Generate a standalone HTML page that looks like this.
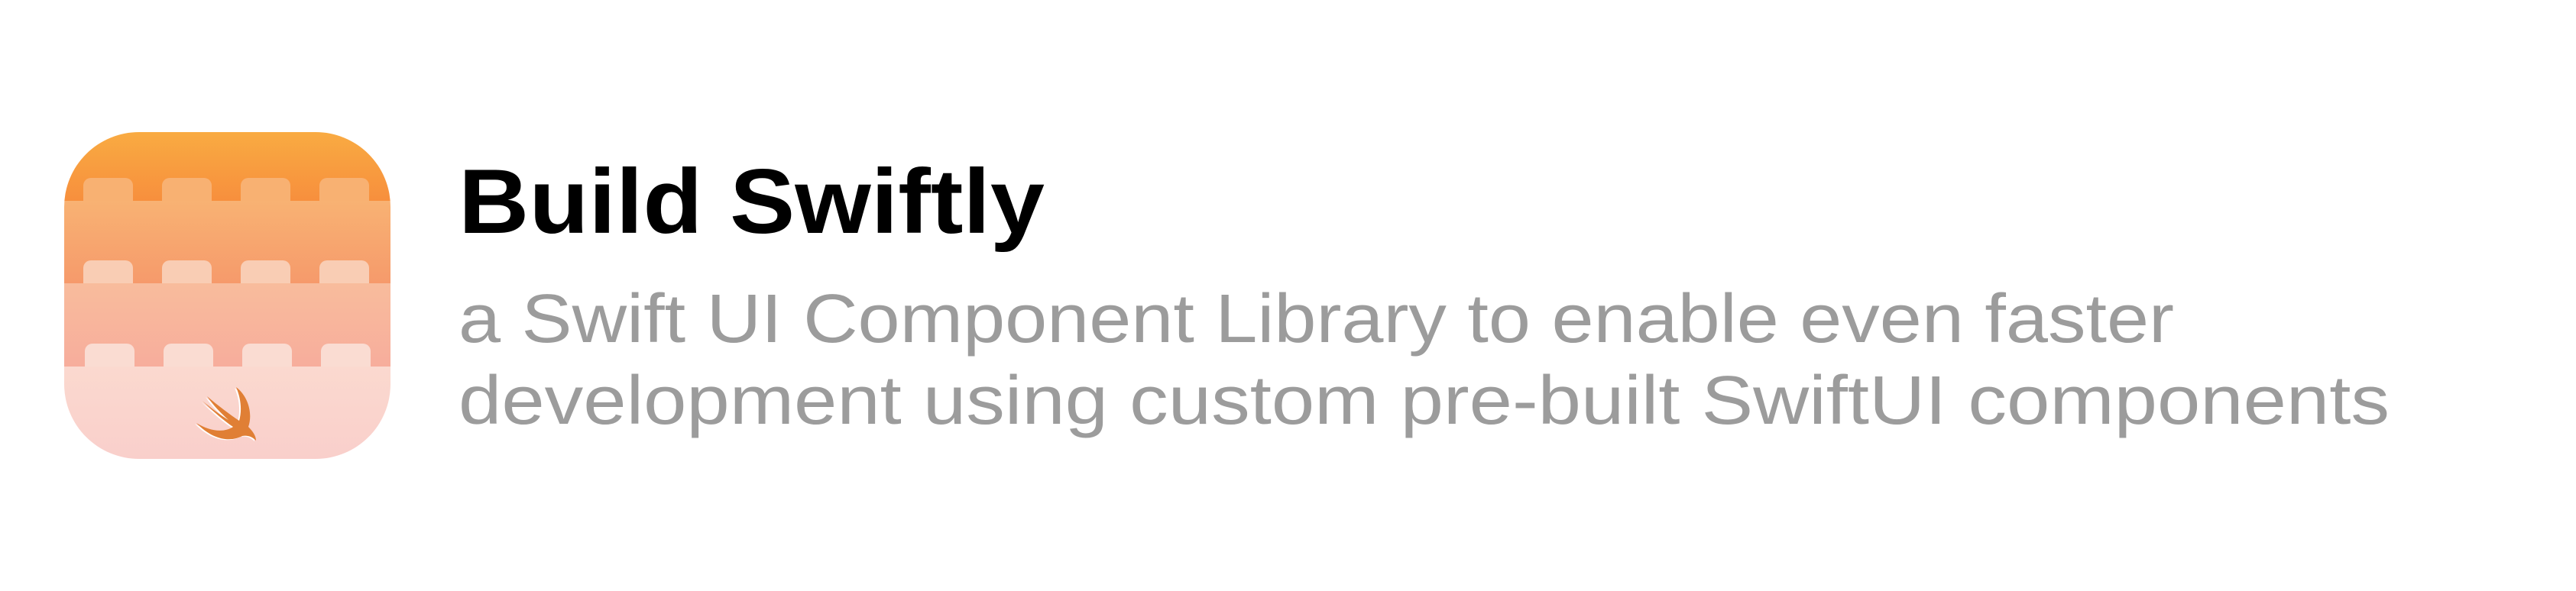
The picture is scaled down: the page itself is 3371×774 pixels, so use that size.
<!DOCTYPE html>
<html><head><meta charset="utf-8"><style>
html,body{margin:0;padding:0;background:#fff;width:3371px;height:774px;overflow:hidden}
</style></head><body>
<svg width="3371" height="774" viewBox="0 0 3371 774" xmlns="http://www.w3.org/2000/svg">
<defs>
<clipPath id="c"><rect x="84" y="173" width="427" height="428" rx="98" ry="98"/></clipPath>
<linearGradient id="g1" x1="0" y1="0" x2="0" y2="1"><stop offset="0" stop-color="#f9ab42"/><stop offset="1" stop-color="#f78f3d"/></linearGradient>
<linearGradient id="g2" x1="0" y1="0" x2="0" y2="1"><stop offset="0" stop-color="#f8b273"/><stop offset="1" stop-color="#f69a6b"/></linearGradient>
<linearGradient id="g3" x1="0" y1="0" x2="0" y2="1"><stop offset="0" stop-color="#f8bc9c"/><stop offset="1" stop-color="#f7ad9c"/></linearGradient>
<linearGradient id="g4" x1="0" y1="0" x2="0" y2="1"><stop offset="0" stop-color="#fbd9cf"/><stop offset="1" stop-color="#f9cfcb"/></linearGradient>
</defs>
<g clip-path="url(#c)">
<rect x="84" y="173" width="427" height="90" fill="url(#g1)"/>
<rect x="84" y="263" width="427" height="108" fill="url(#g2)"/>
<rect x="84" y="371" width="427" height="109" fill="url(#g3)"/>
<rect x="84" y="480" width="427" height="121" fill="url(#g4)"/>
</g>
<g fill="#f8b172">
<path d="M109 263V243a10 10 0 0 1 10-10h45a10 10 0 0 1 10 10v20z"/>
<path d="M212 263V243a10 10 0 0 1 10-10h45a10 10 0 0 1 10 10v20z"/>
<path d="M315 263V243a10 10 0 0 1 10-10h45a10 10 0 0 1 10 10v20z"/>
<path d="M418 263V243a10 10 0 0 1 10-10h45a10 10 0 0 1 10 10v20z"/>
</g>
<g fill="#f9cdb4">
<path d="M109 371V351a10 10 0 0 1 10-10h45a10 10 0 0 1 10 10v20z"/>
<path d="M212 371V351a10 10 0 0 1 10-10h45a10 10 0 0 1 10 10v20z"/>
<path d="M315 371V351a10 10 0 0 1 10-10h45a10 10 0 0 1 10 10v20z"/>
<path d="M418 371V351a10 10 0 0 1 10-10h45a10 10 0 0 1 10 10v20z"/>
</g>
<g fill="#fadcd2">
<path d="M111 480V460a10 10 0 0 1 10-10h45a10 10 0 0 1 10 10v20z"/>
<path d="M214 480V460a10 10 0 0 1 10-10h45a10 10 0 0 1 10 10v20z"/>
<path d="M317 480V460a10 10 0 0 1 10-10h45a10 10 0 0 1 10 10v20z"/>
<path d="M420 480V460a10 10 0 0 1 10-10h45a10 10 0 0 1 10 10v20z"/>
</g>
<g transform="translate(257,507)">
<path d="M52,0 C68,12 74,35 68,52 C74,58 78,64 78,70 C72,64 66,63 60,64 C45,72 22,70 0,47 C18,58 36,60 48,52 C36,44 22,32 8,18 C20,28 32,37 42,43 C32,34 22,24 14,12 C28,24 44,36 56,44 C60,30 58,14 52,0 Z" fill="#fff" transform="translate(-2,1)"/>
<path d="M52,0 C68,12 74,35 68,52 C74,58 78,64 78,70 C72,64 66,63 60,64 C45,72 22,70 0,47 C18,58 36,60 48,52 C36,44 22,32 8,18 C20,28 32,37 42,43 C32,34 22,24 14,12 C28,24 44,36 56,44 C60,30 58,14 52,0 Z" fill="#e07f35"/>
</g>
<text x="600" y="305" font-family="Liberation Sans, sans-serif" font-weight="bold" font-size="120" fill="#000" textLength="767" lengthAdjust="spacingAndGlyphs">Build Swiftly</text>
<text x="600" y="448" font-family="Liberation Sans, sans-serif" font-size="90" fill="#9c9c9c" textLength="2245" lengthAdjust="spacingAndGlyphs">a Swift UI Component Library to enable even faster</text>
<text x="600" y="555" font-family="Liberation Sans, sans-serif" font-size="90" fill="#9c9c9c" textLength="2527" lengthAdjust="spacingAndGlyphs">development using custom pre-built SwiftUI components</text>
</svg>
</body></html>
